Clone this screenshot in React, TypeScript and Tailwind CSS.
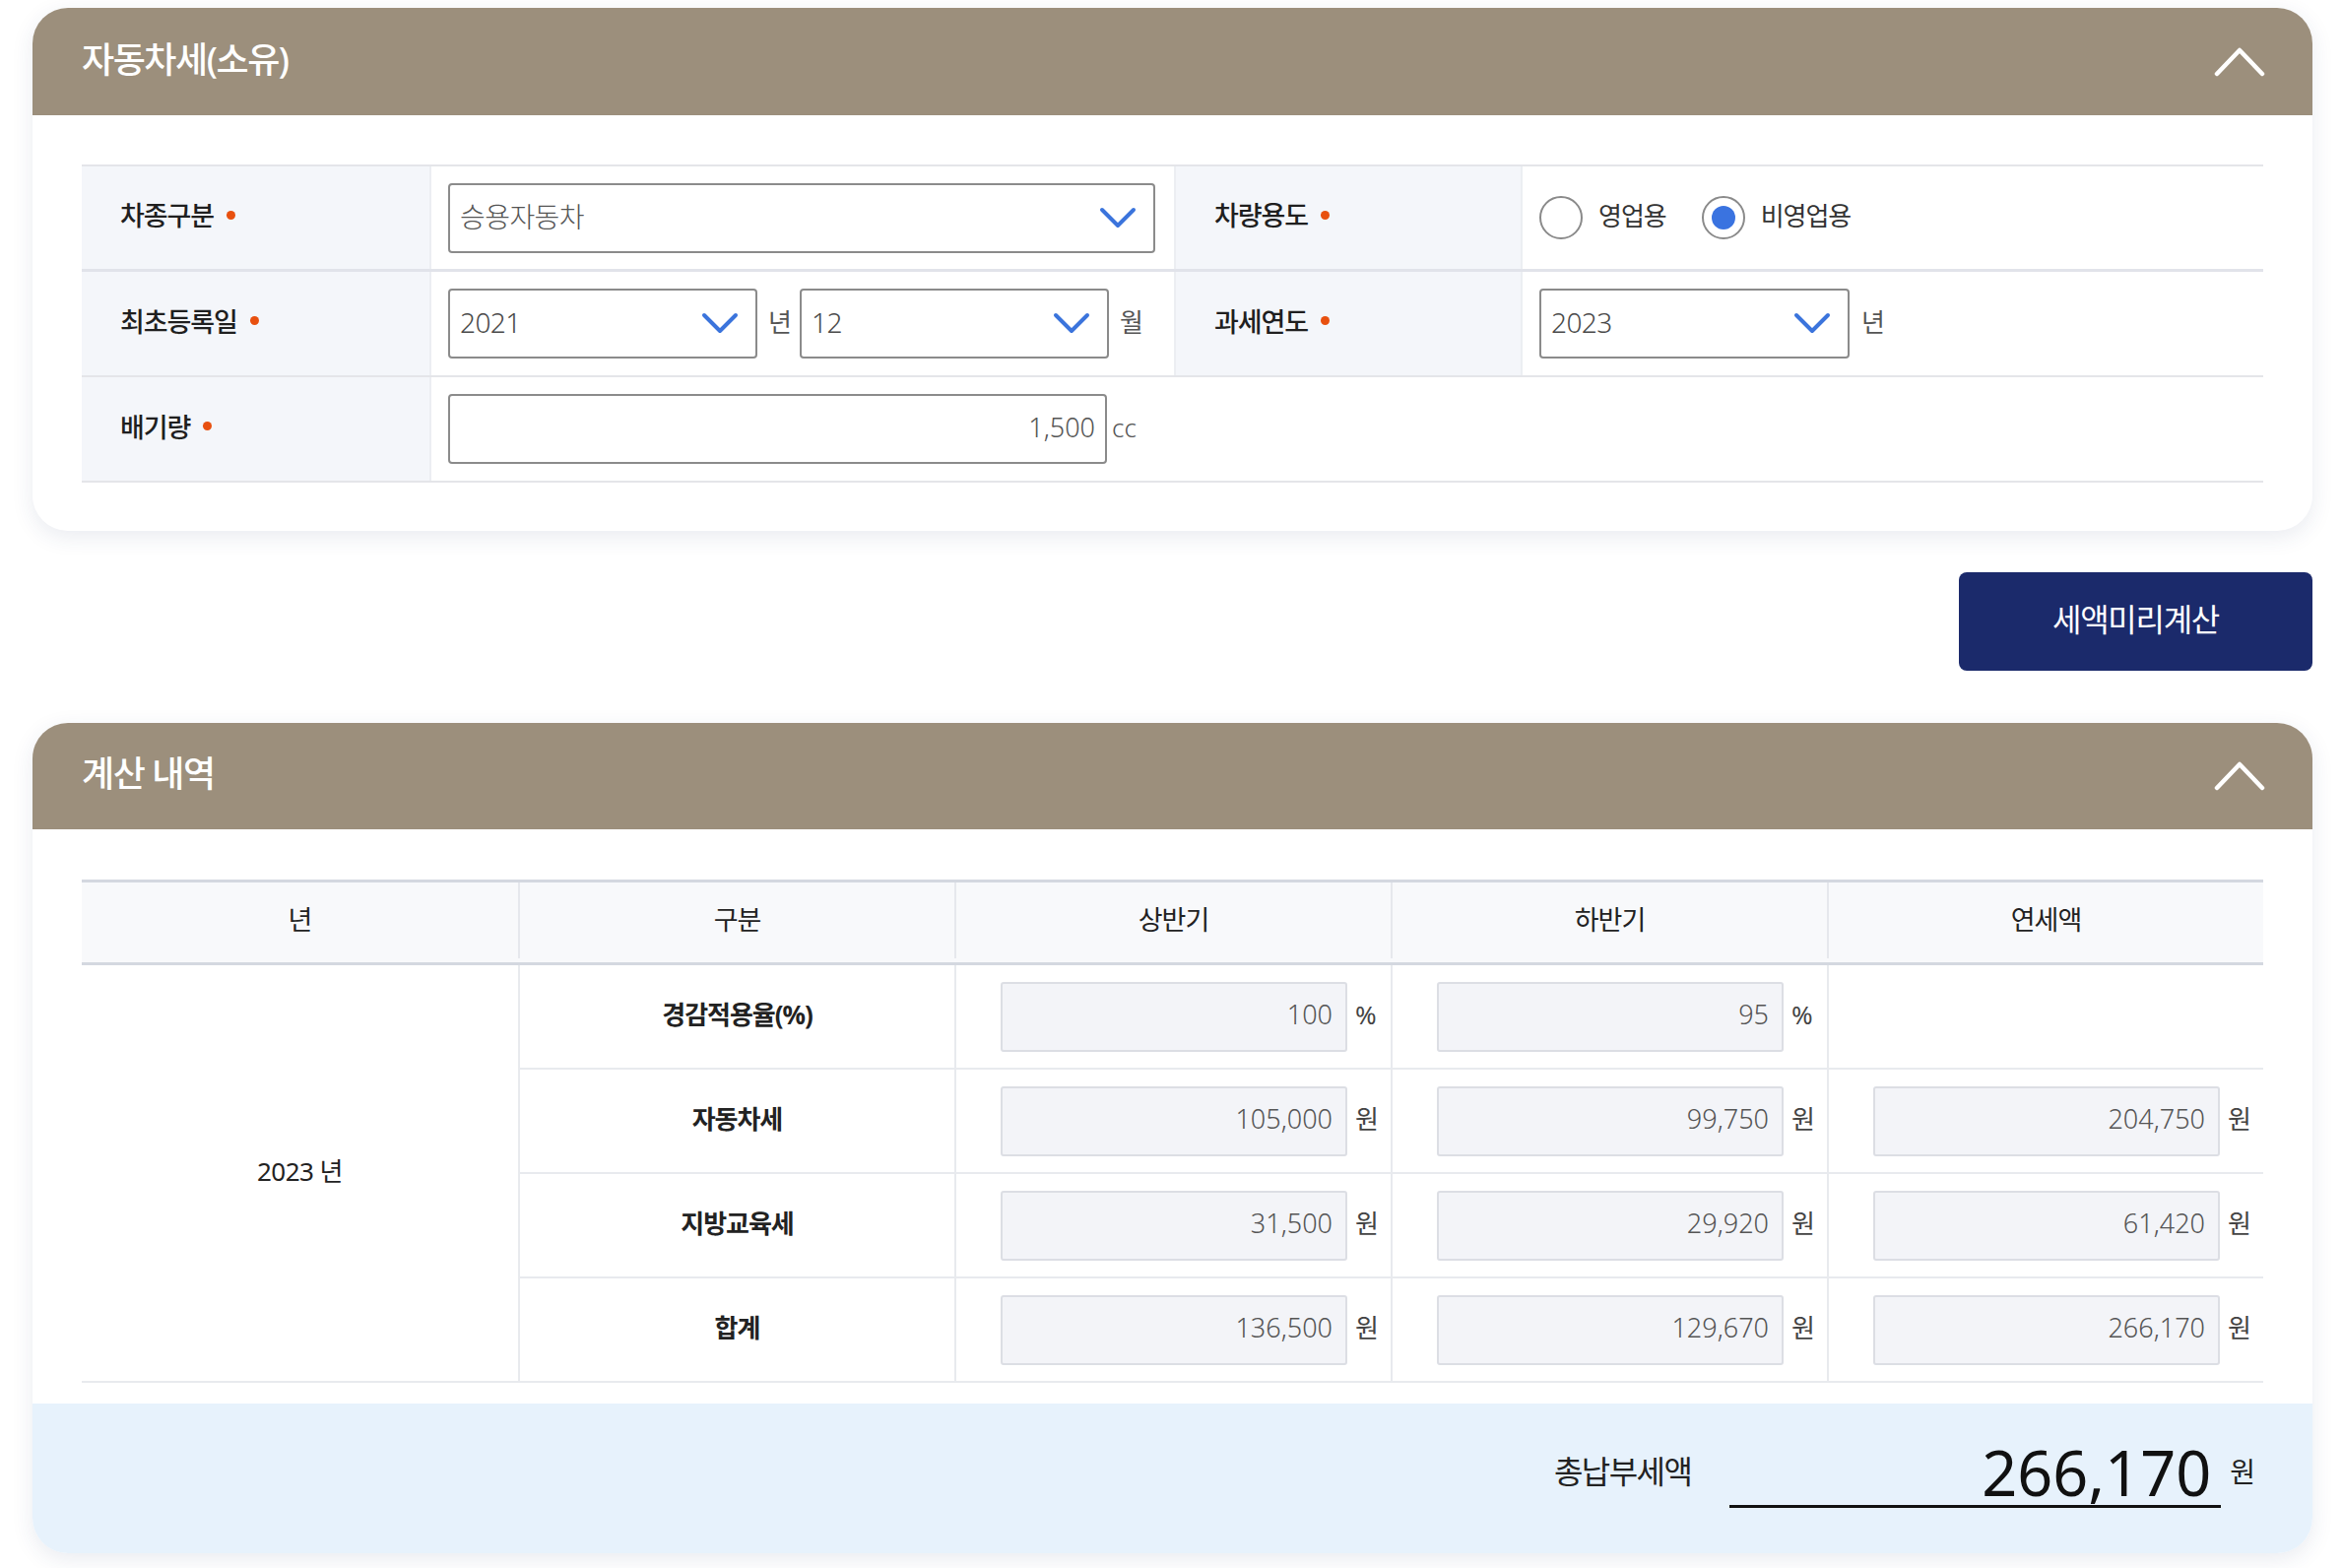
import React from "react";

function ChevronUp() {
  return (
    <svg width="52" height="30" viewBox="0 0 52 30" fill="none">
      <polyline points="3,27 26,3 49,27" stroke="#ffffff" strokeWidth="4.5" strokeLinecap="round" strokeLinejoin="round" />
    </svg>
  );
}

function ChevronDown() {
  return (
    <svg width="38" height="23" viewBox="0 0 38 23" fill="none">
      <polyline points="3,3 19,19 35,3" stroke="#3b74dc" strokeWidth="4" strokeLinecap="round" strokeLinejoin="round" />
    </svg>
  );
}

function Dot() {
  return <span className="ml-[13px] mb-[6px] inline-block h-[9px] w-[9px] rounded-full bg-[#e8500f]" />;
}

function Label({ children, first }: { children: React.ReactNode; first?: boolean }) {
  return (
    <div
      className={
        first
          ? "flex items-center bg-[#f4f6fa] pl-[39px] text-[27px] font-medium tracking-[-0.04em] text-[#1f1f1f] border-r-2 border-[#eceef2]"
          : "flex items-center bg-[#f4f6fa] pl-[39px] text-[27px] font-medium tracking-[-0.04em] text-[#1f1f1f] border-x-2 border-[#eceef2]"
      }
    >
      <span className="mb-[3px]">{children}</span>
      <Dot />
    </div>
  );
}

function Select({ value, className }: { value: string; className: string }) {
  return (
    <div
      className={
        "flex h-[71px] items-center justify-between rounded-[4px] border-2 border-[#8b8b8b] bg-white pl-[10px] pr-[17px] text-[28px] font-light tracking-[-0.02em] text-[#4a4a4a] " +
        className
      }
    >
      <span className="mb-[3px]">{value}</span>
      <ChevronDown />
    </div>
  );
}

function Radio({ checked, label }: { checked?: boolean; label: string }) {
  return (
    <label className="flex items-center">
      <span className="flex h-[44px] w-[44px] items-center justify-center rounded-full border-2 border-[#8a8a8a] bg-white">
        {checked && <span className="h-[24px] w-[24px] rounded-full bg-[#3a73e0]" />}
      </span>
      <span className="mb-[3px] ml-[16px] text-[26px] tracking-[-0.04em] text-[#333]">{label}</span>
    </label>
  );
}

function NumBox({ value, unit }: { value: string; unit: string }) {
  return (
    <div className="flex items-center pl-[45px]">
      <div className="flex h-[71px] w-[352px] items-center justify-end rounded-[3px] border-2 border-[#dcdee4] bg-[#f3f4f8] pr-[13px] text-[27px] font-light text-[#555]">
        <span className="mb-[3px]">{value}</span>
      </div>
      <span className="mb-[3px] ml-[8px] text-[26px] text-[#444]">{unit}</span>
    </div>
  );
}

export default function App() {
  const cell = "flex items-center border-l-2 border-b-2 border-[#e8eaee]";
  const th = "flex items-center justify-center border-l-2 border-[#e6e8ed]";
  return (
    <div className="min-h-[1592px] w-[2378px] bg-white pl-[33px] pr-[30px] pt-[8px] pb-[16px] font-['Noto_Sans','Noto_Sans_CJK_KR',sans-serif] text-[#222]">
      {/* Card 1 */}
      <section className="overflow-hidden rounded-[36px] bg-white shadow-[0_6px_22px_rgba(40,55,110,0.10)]">
        <header className="flex h-[109px] items-center justify-between bg-[#9c8f7c] pl-[50px] pr-[48px]">
          <h2 className="mb-[4px] text-[36px] font-medium tracking-[-0.04em] text-white">자동차세(소유)</h2>
          <ChevronUp />
        </header>
        <div className="px-[50px] pt-[50px] pb-[49px]">
          <div className="border-t-2 border-[#e4e5e9]">
            <div className="grid h-[107px] grid-cols-[355px_754px_354px_1fr] border-b-[3px] border-[#e1e3ea]">
              <Label first>차종구분</Label>
              <div className="flex items-center pl-[17px]">
                <Select value="승용자동차" className="w-[718px] text-[#555]" />
              </div>
              <Label>차량용도</Label>
              <div className="flex items-center gap-[36px] pl-[17px]">
                <Radio label="영업용" />
                <Radio checked label="비영업용" />
              </div>
            </div>
            <div className="grid h-[107px] grid-cols-[355px_754px_354px_1fr] border-b-2 border-[#e4e5e9]">
              <Label first>최초등록일</Label>
              <div className="flex items-center pl-[17px] text-[26px] text-[#555]">
                <Select value="2021" className="w-[314px]" />
                <span className="mb-[3px] ml-[11px] w-[32px]">년</span>
                <Select value="12" className="w-[314px]" />
                <span className="mb-[3px] ml-[11px]">월</span>
              </div>
              <Label>과세연도</Label>
              <div className="flex items-center pl-[17px] text-[26px] text-[#555]">
                <Select value="2023" className="w-[315px]" />
                <span className="mb-[3px] ml-[12px]">년</span>
              </div>
            </div>
            <div className="grid h-[107px] grid-cols-[355px_1fr] border-b-2 border-[#e4e5e9]">
              <Label first>배기량</Label>
              <div className="flex items-center pl-[17px]">
                <div className="flex h-[71px] w-[669px] items-center justify-end rounded-[4px] border-2 border-[#8b8b8b] pr-[10px] text-[27px] font-light text-[#555]">
                  <span className="mb-[3px]">1,500</span>
                </div>
                <span className="mb-[3px] ml-[5px] text-[26px] font-light text-[#555]">cc</span>
              </div>
            </div>
          </div>
        </div>
      </section>

      <div className="mt-[42px] flex justify-end">
        <button className="flex h-[100px] w-[359px] items-center justify-center rounded-[8px] bg-[#1b2a6b] pb-[4px] text-[32px] tracking-[-0.04em] text-white">
          세액미리계산
        </button>
      </div>

      {/* Card 2 */}
      <section className="mt-[53px] overflow-hidden rounded-[36px] bg-white shadow-[0_6px_22px_rgba(40,55,110,0.10)]">
        <header className="flex h-[108px] items-center justify-between bg-[#9c8f7c] pl-[50px] pr-[48px]">
          <h2 className="mb-[4px] text-[36px] font-medium tracking-[-0.04em] text-white">계산 내역</h2>
          <ChevronUp />
        </header>
        <div className="px-[50px] pt-[51px]">
          <div className="grid h-[87px] grid-cols-5 border-y-[3px] border-y-[#d4d8e0] bg-[#f8f9fb] pb-[4px] text-[27px] tracking-[-0.04em] text-[#222]">
            <div className="flex items-center justify-center">년</div>
            <div className={th}>구분</div>
            <div className={th}>상반기</div>
            <div className={th}>하반기</div>
            <div className={th}>연세액</div>
          </div>
          <div className="grid grid-cols-5 grid-rows-[repeat(4,106px)]">
            <div className="row-span-4 flex items-center justify-center border-b-2 border-[#e8eaee] pb-[4px] text-[26px] tracking-[-0.02em]">
              2023 년
            </div>
            <div className={cell + " justify-center pb-[4px] text-[26px] font-bold tracking-[-0.04em]"}>경감적용율(%)</div>
            <div className={cell}><NumBox value="100" unit="%" /></div>
            <div className={cell}><NumBox value="95" unit="%" /></div>
            <div className={cell}></div>

            <div className={cell + " justify-center pb-[4px] text-[26px] font-bold tracking-[-0.04em]"}>자동차세</div>
            <div className={cell}><NumBox value="105,000" unit="원" /></div>
            <div className={cell}><NumBox value="99,750" unit="원" /></div>
            <div className={cell}><NumBox value="204,750" unit="원" /></div>

            <div className={cell + " justify-center pb-[4px] text-[26px] font-bold tracking-[-0.04em]"}>지방교육세</div>
            <div className={cell}><NumBox value="31,500" unit="원" /></div>
            <div className={cell}><NumBox value="29,920" unit="원" /></div>
            <div className={cell}><NumBox value="61,420" unit="원" /></div>

            <div className={cell + " justify-center pb-[4px] text-[26px] font-bold tracking-[-0.04em]"}>합계</div>
            <div className={cell}><NumBox value="136,500" unit="원" /></div>
            <div className={cell}><NumBox value="129,670" unit="원" /></div>
            <div className={cell}><NumBox value="266,170" unit="원" /></div>
          </div>
        </div>
        <div className="mt-[21px] flex h-[152px] items-center justify-end bg-[#e7f2fc] pr-[58px]">
          <span className="mb-[14px] mr-[39px] text-[32px] tracking-[-0.05em] text-[#222]">총납부세액</span>
          <div className="mb-[20px] flex h-[80px] w-[499px] items-end justify-end border-b-[3px] border-[#111] pb-[2px] pr-[10px] text-[63px] leading-none text-[#111]">
            266,170
          </div>
          <span className="mb-[14px] ml-[9px] text-[28px] text-[#222]">원</span>
        </div>
      </section>
    </div>
  );
}
